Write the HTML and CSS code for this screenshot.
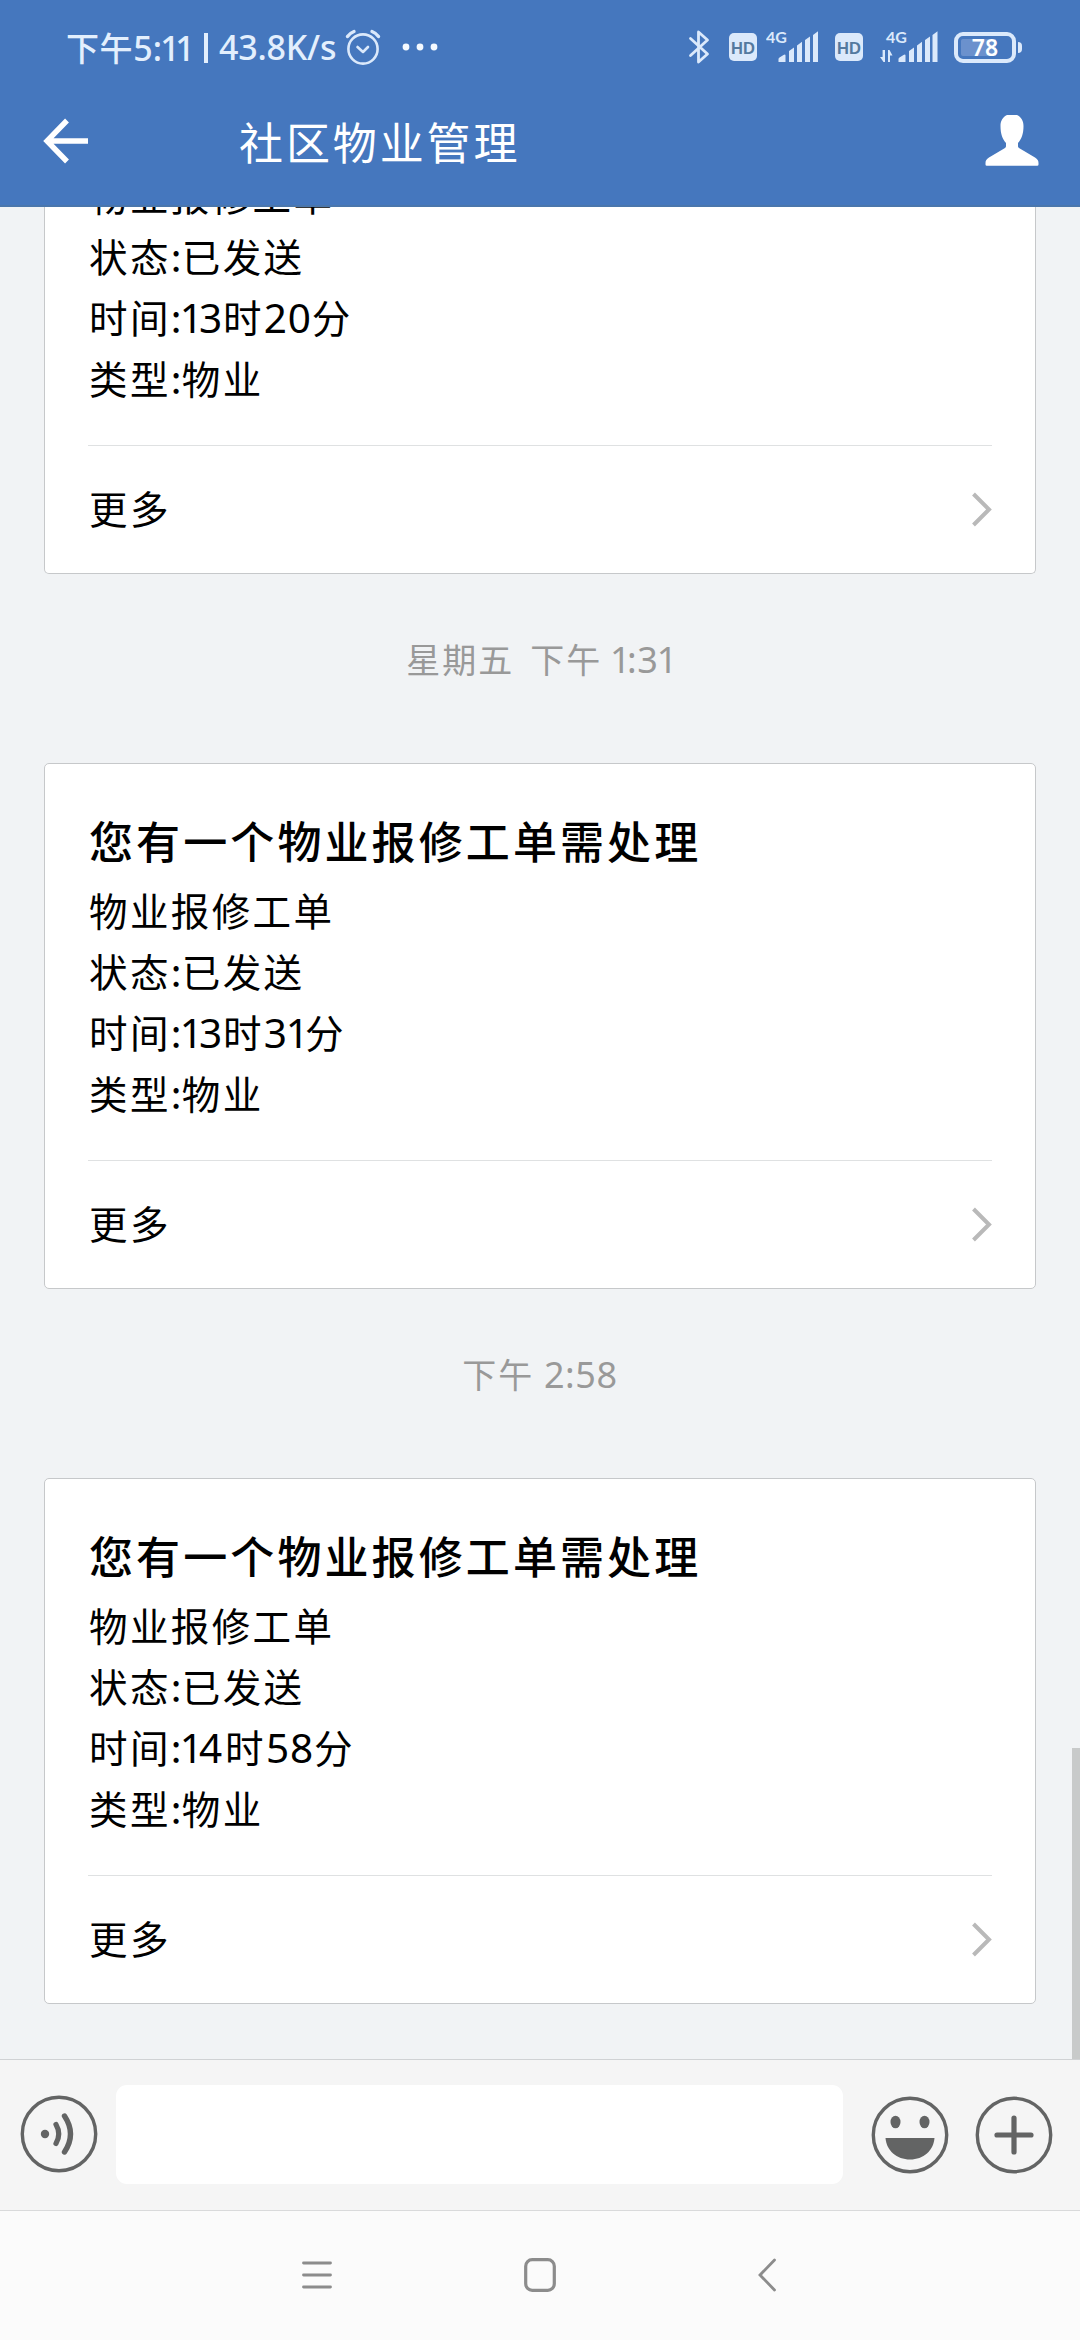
FILE: index.html
```html
<!DOCTYPE html>
<html lang="zh-CN">
<head>
<meta charset="utf-8">
<title>社区物业管理</title>
<link rel="stylesheet" href="styles.css">
</head>
<body>
<div class="screen">
  <header class="top">
    <div class="status">
      <div class="status-left">
        <span class="clock">下午<span class="num">5:<b class="one">1</b><b class="one">1</b></span></span>
        <span class="bar"></span>
        <span class="speed num">43.8K/s</span>
        <svg class="alarm" width="36" height="36" viewBox="0 0 36 36" fill="none" stroke="#dbe9fb" stroke-width="2.6" stroke-linecap="round" stroke-linejoin="round"><circle cx="18" cy="20" r="14.6"/><path d="M12.5 18l5.5 5 5-5"/><path d="M2.5 7.5Q5 4 9 2.500M33.500 7.500Q31 4 27 2.500" stroke-width="3.400"/></svg>
        <svg class="dots" width="36" height="8" viewBox="0 0 36 8" fill="#f4f9ff"><circle cx="4" cy="4" r="3.400"/><circle cx="18" cy="4" r="3.400"/><circle cx="32" cy="4" r="3.400"/></svg>
      </div>
      <div class="status-right">
        <svg class="bt" width="22" height="36" viewBox="0 0 22 36" fill="none" stroke="#dbe9fb" stroke-width="2.800" stroke-linecap="round" stroke-linejoin="round"><path d="M2.500 9.500L19.500 25 10.500 33V3L19.500 11 2.500 26.500"/></svg>
        <span class="hd">HD</span>
        <svg class="sig" width="54" height="44" viewBox="0 -5 54 44" fill="#dbe9fb"><text class="g4" x="0" y="13">4G</text><path d="M12.500 32v-3q0-1 1-1.600l4-2.400q2-1 2 .5V32zM23 32V21l5-3.500V32zM31 32V15.500l5-3.800V32zM39 32V10l5-3.500V32zM47 32V5l5-3.800V32z"/></svg>
        <span class="hd">HD</span>
        <svg class="sig2" width="60" height="44" viewBox="0 -5 60 44" fill="#dbe9fb"><text class="g4" x="6" y="13">4G</text><path d="M0 27h2.600V20H5v12H3.500zM8 32V20h1.500l3 5.500H10V32zM18.500 32v-3q0-1 1-1.600l4-2.400q2-1 2 .5V32zM29 32V21l5-3.500V32zM37 32V15.500l5-3.800V32zM45 32V10l5-3.500V32zM52.500 32V5l5-3.800V32z"/></svg>
        <span class="battery"><span class="battery-body">78</span><span class="battery-tip"></span></span>
      </div>
    </div>
    <div class="titlebar">
      <svg width="46" height="48" viewBox="0 0 46 48" fill="none" stroke="#fff" stroke-width="5.400"><path d="M24 2.500L4 23l20 20.500M4 23h41"/></svg>
      <h1>社区物业管理</h1>
      <svg width="54" height="54" viewBox="0 1 54 54" fill="#fff"><path d="M27 0c7 0 11.500 5 11.500 12 0 8-2 13-5.500 17v3c0 1 .4 1.600 1.400 2.300L50 43.500c2.500 1.600 3.500 3 3.500 5.500v1.500q0 1.200-1.300 1.200H1.800Q.5 51.700.5 50.500V49c0-2.500 1-3.900 3.500-5.500l15.600-9.200c1-.7 1.400-1.300 1.400-2.300v-3c-3.500-4-5.500-9-5.500-17C15.500 5 20 0 27 0z"/></svg>
    </div>
  </header>

  <main class="chat">
    <div class="feed">
      <article class="card card-continued">
        <p>物业报修工单</p>
        <p>状态<i class="colon">:</i>已发送</p>
        <p>时间<i class="colon">:</i><span class="num"><b class="one">1</b>3</span>时<span class="num">20</span>分</p>
        <p>类型<i class="colon">:</i>物业</p>
        <div class="more"><span>更多</span><svg width="20" height="36" viewBox="0 0 20 36" fill="none" stroke="#b9b9b9" stroke-width="4"><path d="M1.500 2L17 17.500 1.500 33"/></svg></div>
      </article>
      <time>星期五<span class="gap"></span>下午 <span class="num"><b class="one">1</b>:3<b class="one">1</b></span></time>
      <article class="card">
        <h2>您有一个物业报修工单需处理</h2>
        <p>物业报修工单</p>
        <p>状态<i class="colon">:</i>已发送</p>
        <p>时间<i class="colon">:</i><span class="num"><b class="one">1</b>3</span>时<span class="num">3<b class="one">1</b></span>分</p>
        <p>类型<i class="colon">:</i>物业</p>
        <div class="more"><span>更多</span><svg width="20" height="36" viewBox="0 0 20 36" fill="none" stroke="#b9b9b9" stroke-width="4"><path d="M1.500 2L17 17.500 1.500 33"/></svg></div>
      </article>
      <time>下午 <span class="num">2:58</span></time>
      <article class="card">
        <h2>您有一个物业报修工单需处理</h2>
        <p>物业报修工单</p>
        <p>状态<i class="colon">:</i>已发送</p>
        <p>时间<i class="colon">:</i><span class="num wide"><b class="one">1</b>4</span>时<span class="num">58</span>分</p>
        <p>类型<i class="colon">:</i>物业</p>
        <div class="more"><span>更多</span><svg width="20" height="36" viewBox="0 0 20 36" fill="none" stroke="#b9b9b9" stroke-width="4"><path d="M1.500 2L17 17.500 1.500 33"/></svg></div>
      </article>
    </div>
    <div class="scrollbar"></div>
  </main>

  <footer class="composer">
    <svg class="voice" width="78" height="78" viewBox="0 0 78 78" fill="none" stroke="#636464" stroke-linecap="round"><circle cx="39" cy="39" r="36.700" stroke-width="3.400"/><circle cx="25" cy="39" r="4.200" fill="#636464" stroke="none"/><path d="M36 29.500Q41.500 39 36 48.500" stroke-width="5.200"/><path d="M44.500 21Q56.500 39 44.500 57" stroke-width="5.400"/></svg>
    <div class="field"></div>
    <svg class="smile" width="78" height="78" viewBox="0 0 78 78"><circle cx="39" cy="39" r="36.700" fill="none" stroke="#636464" stroke-width="3.400"/><g fill="#636464"><ellipse cx="24.500" cy="26" rx="5" ry="6.300"/><ellipse cx="53.500" cy="26" rx="5" ry="6.300"/><path d="M14.500 42h49c-1 12.500-11 21.500-24.500 21.500S15.500 54.500 14.500 42z"/></g></svg>
    <svg class="plus" width="78" height="78" viewBox="0 0 78 78" fill="none" stroke="#636464"><circle cx="39" cy="39" r="36.700" stroke-width="3.400"/><path d="M39 22v34M22 39h34" stroke-width="5.200" stroke-linecap="round"/></svg>
  </footer>

  <nav class="sysnav">
    <svg width="30" height="32" viewBox="0 0 30 32" stroke="#8c8c8c" stroke-width="2.800" stroke-linecap="round"><path d="M1.500 4h27M1.500 16h27M1.500 28h27"/></svg>
    <svg class="home" width="32" height="34" viewBox="0 0 32 34" fill="none" stroke="#8c8c8c" stroke-width="3.200"><rect x="1.700" y="1.700" width="28.600" height="30.600" rx="6.500"/></svg>
    <svg width="20" height="34" viewBox="0 0 20 34" fill="none" stroke="#8c8c8c" stroke-width="2.800" stroke-linecap="round"><path d="M17.500 2L3 17l14.500 15"/></svg>
  </nav>
</div>
</body>
</html>
```

FILE: styles.css
```css
* { box-sizing: border-box; margin: 0; padding: 0; }

body {
  font-family: "Noto Sans CJK SC", sans-serif;
  background: #f1f3f5;
}

svg { display: block; flex: none; }

.screen {
  width: 1080px;
  height: 2340px;
  display: flex;
  flex-direction: column;
  overflow: hidden;
}

.num { font-family: "Noto Sans", sans-serif; }

/* narrow figure one, so that numbers are set proportionally */
.one { font-weight: inherit; margin-left: -0.05em; letter-spacing: -0.1em; }

/* header */
.top {
  height: 207px;
  flex: none;
  background: #4577be;
  border-bottom: 2px solid #4a76ac;
  color: #fff;
}

.status {
  height: 94px;
  display: flex;
  justify-content: space-between;
  padding: 0 58px 0 66px;
}

.status-left, .status-right { display: flex; align-items: center; }

.clock, .speed {
  font-size: 33px;
  font-weight: 500;
  line-height: 48px;
  color: #e3effd;
  white-space: nowrap;
}

.clock { width: 128px; letter-spacing: 0.6px; }
.clock .num { font-size: 34px; letter-spacing: 0; }
.clock .one { letter-spacing: -0.08em; }
.speed.num { width: 117px; font-size: 34px; letter-spacing: -0.2px; }

.bar { width: 4px; height: 30px; margin: 2px 11px 0 10px; background: #e3effd; }
.alarm { margin-left: 9px; }
.dots { margin-left: 21px; }

.bt { margin-right: 19px; }

.hd {
  width: 28px;
  height: 28px;
  border-radius: 5px;
  background: #dbe9fb;
  color: #54799f;
  font: bold 16.5px/30px "Liberation Sans", sans-serif;
  text-align: center;
}

.sig { margin: 0 15px 0 9px; }
.sig2 { margin: 0 14px 0 17px; }
.g4 { font: bold 16px Lato, sans-serif; }

.battery { display: flex; align-items: center; gap: 2px; }

.battery-body {
  width: 62px;
  height: 31px;
  border: 4px solid #dbe9fb;
  border-radius: 9px;
  background: linear-gradient(90deg, #6b91cd 72%, #4577be 72%) content-box;
  padding: 3px;
  font: 600 23px/17px "Noto Sans", sans-serif;
  text-align: center;
}

.battery-tip { width: 4px; height: 11px; border-radius: 0 4px 4px 0; background: #dbe9fb; }

.titlebar {
  height: 96px;
  display: flex;
  align-items: center;
  padding: 0 41px 0 43px;
}

.titlebar h1 {
  flex: 1;
  margin: -3px 0 0 150px;
  font-size: 44px;
  font-weight: 400;
  line-height: 64px;
  letter-spacing: 2.9px;
}

/* conversation */
.chat {
  height: 1852px;
  flex: none;
  position: relative;
  overflow: hidden;
}

.feed {
  margin-top: -43px;
  display: flex;
  flex-direction: column;
  align-items: center;
}

.card {
  width: 992px;
  height: 526px;
  flex: none;
  padding: 43px 43px 0 44px;
  background: #fff;
  border: 1px solid #c6c8ca;
  border-radius: 5px;
  color: #000;
}

.card-continued {
  height: 410px;
  padding-top: 0;
  border-top: 0;
  border-radius: 0 0 5px 5px;
}

.card h2 {
  height: 72px;
  font-size: 44px;
  font-weight: 500;
  line-height: 66px;
  letter-spacing: 3.1px;
  white-space: nowrap;
}

.card p {
  font-size: 38.5px;
  line-height: 61px;
  height: 61px;
  letter-spacing: 2.4px;
  white-space: nowrap;
}

.card .num { font-size: 40.5px; letter-spacing: 0.8px; }
.card .one { letter-spacing: -0.1em; }
.card .wide { letter-spacing: 3px; }

.colon {
  display: inline-block;
  width: 11px;
  font-style: normal;
  letter-spacing: 0;
}

.more {
  height: 128px;
  margin: 37px 0 0 -1px;
  padding-left: 1px;
  border-top: 1px solid #dfe1e2;
  display: flex;
  align-items: center;
  justify-content: space-between;
  font-size: 38.5px;
  letter-spacing: 2.4px;
}

.more span { margin-top: -5px; }

time {
  height: 189px;
  line-height: 169px;
  font-size: 34px;
  letter-spacing: 2px;
  color: #999;
  white-space: pre;
}

time .num { font-size: 36px; letter-spacing: 0.6px; }
.gap { display: inline-block; width: 16px; }

.scrollbar {
  position: absolute;
  right: 0;
  bottom: 0;
  width: 8px;
  height: 311px;
  background: #c8caca;
}

/* message composer */
.composer {
  height: 151px;
  flex: none;
  display: flex;
  align-items: center;
  padding: 0 27px 1px 20px;
  background: #f5f5f5;
  border-top: 1px solid #d0d2d4;
}

.voice { margin: 0 18px 2px 0; }
.field { flex: 1; height: 99px; border-radius: 11px; background: #fff; }
.smile { margin: 0 26px 0 28px; }

/* system navigation */
.sysnav {
  height: 130px;
  flex: none;
  display: flex;
  align-items: center;
  padding: 0 0 2px 302px;
  background: #fbfbfb;
  border-top: 1px solid #d9dadb;
}

.home { margin: 0 201px 0 192px; }
```
